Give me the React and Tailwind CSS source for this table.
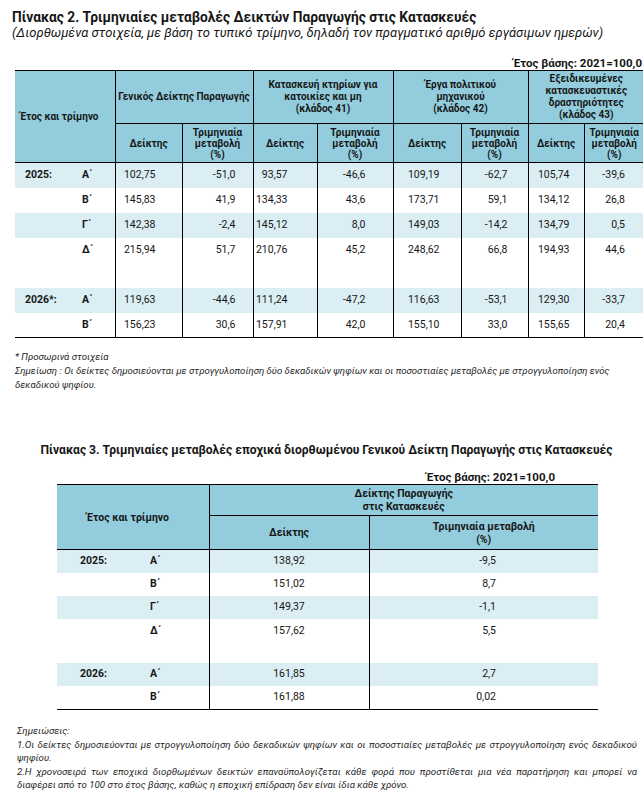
import React from "react";

const font = { fontFamily: "Roboto, 'Noto Sans', sans-serif" };

const rows2 = [
  { year: "2025:", q: "Α΄", v: ["102,75", "-51,0", "93,57", "-46,6", "109,19", "-62,7", "105,74", "-39,6"], shade: true },
  { year: "", q: "Β΄", v: ["145,83", "41,9", "134,33", "43,6", "173,71", "59,1", "134,12", "26,8"] },
  { year: "", q: "Γ΄", v: ["142,38", "-2,4", "145,12", "8,0", "149,03", "-14,2", "134,79", "0,5"], shade: true },
  { year: "", q: "Δ΄", v: ["215,94", "51,7", "210,76", "45,2", "248,62", "66,8", "194,93", "44,6"] },
  { empty: true },
  { year: "2026*:", q: "Α΄", v: ["119,63", "-44,6", "111,24", "-47,2", "116,63", "-53,1", "129,30", "-33,7"], shade: true },
  { year: "", q: "Β΄", v: ["156,23", "30,6", "157,91", "42,0", "155,10", "33,0", "155,65", "20,4"], last: true },
];

// right padding of each value column so the numbers sit where they do in the print
const pad2 = ["pr-[26px]", "pr-[17px]", "pr-[29px]", "pr-[27px]", "pr-[21px]", "pr-[20px]", "pr-[14px]", "pr-[19px]"];

const rows3 = [
  { year: "2025:", q: "Α΄", v: ["138,92", "-9,5"], shade: true, h: "h-[23px]" },
  { year: "", q: "Β΄", v: ["151,02", "8,7"], h: "h-[23px]" },
  { year: "", q: "Γ΄", v: ["149,37", "-1,1"], shade: true, h: "h-[23px]" },
  { year: "", q: "Δ΄", v: ["157,62", "5,5"], h: "h-[24px]" },
  { empty: true, h: "h-[20px]" },
  { year: "2026:", q: "Α΄", v: ["161,85", "2,7"], shade: true, h: "h-[23px]" },
  { year: "", q: "Β΄", v: ["161,88", "0,02"], h: "h-[24px]", last: true },
];

const Table2 = () => (
  <table className="table-fixed border-collapse ml-[15px] text-[#161616]">
    <colgroup>
      <col className="w-[100px]" />
      <col className="w-[67px]" />
      <col className="w-[71px]" />
      <col className="w-[64px]" />
      <col className="w-[76px]" />
      <col className="w-[68px]" />
      <col className="w-[67px]" />
      <col className="w-[56px]" />
      <col className="w-[60px]" />
    </colgroup>
    <thead className="bg-[#93cddd] text-[10px] font-bold leading-[12px]">
      <tr className="h-[53px]">
        <th rowSpan={2} className="text-left pl-[5px] font-bold border-t border-b border-r border-black">
          Έτος και τρίμηνο
        </th>
        <th colSpan={2} className="border border-black font-bold">Γενικός Δείκτης Παραγωγής</th>
        <th colSpan={2} className="border border-black font-bold">
          Κατασκευή κτηρίων για
          <br />
          κατοικίες και μη
          <br />
          (κλάδος 41)
        </th>
        <th colSpan={2} className="border border-black font-bold">
          Έργα πολιτικού
          <br />
          μηχανικού
          <br />
          (κλάδος 42)
        </th>
        <th colSpan={2} className="border-t border-b border-l border-black font-bold">
          Εξειδικευμένες
          <br />
          κατασκευαστικές
          <br />
          δραστηριότητες
          <br />
          (κλάδος 43)
        </th>
      </tr>
      <tr className="h-[39px] leading-[11px]">
        {[0, 1, 2, 3].map((g) => (
          <React.Fragment key={g}>
            <th className="border border-black font-bold">Δείκτης</th>
            <th className={`border-t border-b border-l border-black font-bold ${g < 3 ? "border-r" : ""}`}>
              Τριμηνιαία
              <br />
              μεταβολή
              <br />
              (%)
            </th>
          </React.Fragment>
        ))}
      </tr>
    </thead>
    <tbody className="text-[10.5px]">
      {rows2.map((r, i) => (
        <tr
          key={i}
          className={`h-[25px] ${r.shade ? "bg-[#dbeef4]" : "bg-white"} ${r.last ? "border-b border-black" : ""}`}
        >
          <td className="border-r border-black p-0">
            {!r.empty && (
              <div className="flex items-center font-bold pl-[10px]">
                <span className="w-[57px]">{r.year}</span>
                <span>{r.q}</span>
              </div>
            )}
          </td>
          {Array.from({ length: 8 }).map((_, j) => (
            <td key={j} className={`border-l border-black text-right p-0 ${pad2[j]} ${j < 7 ? "border-r" : ""}`}>
              {r.empty ? "" : r.v[j]}
            </td>
          ))}
        </tr>
      ))}
    </tbody>
  </table>
);

const Table3 = () => (
  <table className="table-fixed border-collapse ml-[57px] text-[#161616]">
    <colgroup>
      <col className="w-[152px]" />
      <col className="w-[160px]" />
      <col className="w-[229px]" />
    </colgroup>
    <thead className="bg-[#93cddd] text-[10.5px] font-bold leading-[13px]">
      <tr className="h-[31px]">
        <th rowSpan={2} className="font-bold border-t border-b border-r border-black pr-[10px]">
          Έτος και τρίμηνο
        </th>
        <th colSpan={2} className="font-bold border-t border-b border-l border-black">
          Δείκτης Παραγωγής
          <br />
          στις Κατασκευές
        </th>
      </tr>
      <tr className="h-[34px]">
        <th className="font-bold border border-black">Δείκτης</th>
        <th className="font-bold border-t border-b border-l border-black">
          Τριμηνιαία μεταβολή
          <br />
          (%)
        </th>
      </tr>
    </thead>
    <tbody className="text-[10.5px]">
      {rows3.map((r, i) => (
        <tr
          key={i}
          className={`${r.h} ${r.shade ? "bg-[#dbeef4]" : "bg-white"} ${r.last ? "border-b border-black" : ""}`}
        >
          <td className="border-r border-black p-0">
            {!r.empty && (
              <div className="flex items-center font-bold pl-[23px]">
                <span className="w-[70px]">{r.year}</span>
                <span>{r.q}</span>
              </div>
            )}
          </td>
          <td className="border-l border-r border-black text-center p-0">{r.empty ? "" : r.v[0]}</td>
          <td className="border-l border-black text-right pr-[102px] p-0">{r.empty ? "" : r.v[1]}</td>
        </tr>
      ))}
    </tbody>
  </table>
);

export default function App() {
  return (
    <div className="w-[643px] h-[802px] overflow-hidden bg-white text-[#161616]" style={font}>
      <div className="pt-[9px] pl-[12px]">
        <h1 className="text-[13.75px] font-bold leading-[16px]">
          Πίνακας 2. Τριμηνιαίες μεταβολές Δεικτών Παραγωγής στις Κατασκευές
        </h1>
        <p className="text-[13px] italic leading-[16px]">
          (Διορθωμένα στοιχεία, με βάση το τυπικό τρίμηνο, δηλαδή τον πραγματικό αριθμό εργάσιμων ημερών)
        </p>
      </div>
      <div className="mt-[15px] pr-[1px] text-right text-[11.5px] font-bold leading-[14px]">Έτος βάσης: 2021=100,0</div>
      <div className="w-[660px]">
        <Table2 />
      </div>
      <div className="mt-[12px] pl-[15px] pr-[8px] text-[9.6px] italic leading-[14px] text-[#262626]">
        <p>* Προσωρινά στοιχεία</p>
        <p>
          Σημείωση : Οι δείκτες δημοσιεύονται με στρογγυλοποίηση δύο δεκαδικών ψηφίων και οι ποσοστιαίες μεταβολές με
          στρογγυλοποίηση ενός δεκαδικού ψηφίου.
        </p>
      </div>
      <h2 className="mt-[50px] pl-[10px] text-center text-[12.1px] font-bold leading-[16px]">
        Πίνακας 3. Τριμηνιαίες μεταβολές εποχικά διορθωμένου Γενικού Δείκτη Παραγωγής στις Κατασκευές
      </h2>
      <div className="mt-[12px] w-[555px] text-right text-[11.5px] font-bold leading-[14px]">Έτος βάσης: 2021=100,0</div>
      <Table3 />
      <div className="mt-[14px] pl-[17px] pr-[6px] text-[9.7px] italic leading-[13.5px] text-justify text-[#262626]">
        <p>Σημειώσεις:</p>
        <p>
          1.Οι δείκτες δημοσιεύονται με στρογγυλοποίηση δύο δεκαδικών ψηφίων και οι ποσοστιαίες μεταβολές με
          στρογγυλοποίηση ενός δεκαδικού ψηφίου.
        </p>
        <p>
          2.Η χρονοσειρά των εποχικά διορθωμένων δεικτών επαναϋπολογίζεται κάθε φορά που προστίθεται μια νέα παρατήρηση
          και μπορεί να διαφέρει από το 100 στο έτος βάσης, καθώς η εποχική επίδραση δεν είναι ίδια κάθε χρόνο.
        </p>
      </div>
    </div>
  );
}
